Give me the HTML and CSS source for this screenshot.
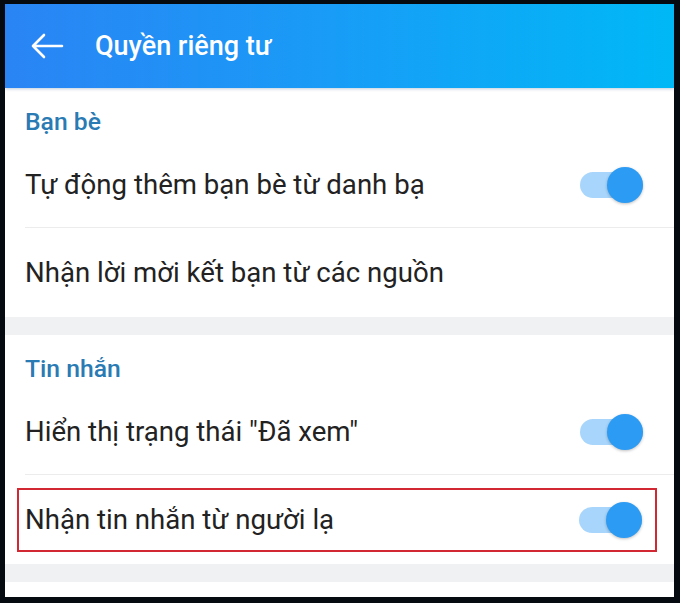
FILE: index.html
```html
<!DOCTYPE html>
<html lang="vi">
<head>
<meta charset="utf-8">
<link rel="stylesheet" href="styles.css">
</head>
<body>
<div class="frame">
  <div class="app">
    <header class="topbar">
      <svg class="back" width="34" height="26" viewBox="0 0 34 26" aria-hidden="true">
        <path d="M32 13H3M14 2L3 13l11 11" fill="none" stroke="#fff" stroke-width="2.6" stroke-linecap="round" stroke-linejoin="round"/>
      </svg>
      <h1 class="title">Quyền riêng tư</h1>
    </header>

    <section class="section">
      <div class="section-title">Bạn bè</div>
      <div class="row row-first">
        <span class="label">Tự động thêm bạn bè từ danh bạ</span>
        <span class="toggle"><span class="knob"></span></span>
      </div>
      <div class="row row-last">
        <span class="label">Nhận lời mời kết bạn từ các nguồn</span>
      </div>
    </section>

    <div class="gap"></div>

    <section class="section">
      <div class="section-title">Tin nhắn</div>
      <div class="row row-first">
        <span class="label">Hiển thị trạng thái "Đã xem"</span>
        <span class="toggle"><span class="knob"></span></span>
      </div>
      <div class="row row-last">
        <div class="highlight">
          <span class="label">Nhận tin nhắn từ người lạ</span>
          <span class="toggle"><span class="knob"></span></span>
        </div>
      </div>
    </section>

    <div class="gap"></div>
  </div>
</div>
</body>
</html>
```

FILE: styles.css
```css
* { box-sizing: border-box; }
html, body { margin: 0; padding: 0; }
body {
  width: 680px;
  height: 603px;
  background: #050a10;
  font-family: Roboto, "Noto Sans", Arial, sans-serif;
  overflow: hidden;
}
.frame {
  width: 680px;
  height: 603px;
  padding: 4px 6px 6px 5px;
}
.app {
  width: 669px;
  height: 593px;
  background: #fff;
  overflow: hidden;
}
.topbar {
  height: 84px;
  display: flex;
  align-items: center;
  padding-left: 25px;
  background: linear-gradient(90deg, #2a84f4 0%, #1a9af7 45%, #00b8f6 100%);
  box-shadow: 0 1px 3px rgba(0, 60, 120, 0.25);
  position: relative;
  z-index: 1;
}
.back { display: block; margin-right: 31px; }
.title {
  margin: 0;
  color: #fff;
  font-size: 27px;
  font-weight: 500;
}
.section { background: #fff; }
.section-title {
  height: 62px;
  padding: 4px 0 0 20px;
  display: flex;
  align-items: center;
  color: #2a7ab3;
  font-size: 24.7px;
  font-weight: 500;
}
.row {
  display: flex;
  align-items: center;
  justify-content: space-between;
  margin-left: 20px;
  padding-right: 31px;
}
.row-first {
  height: 78px;
  border-bottom: 1px solid #ececec;
  padding-bottom: 8px;
}
.row-last { height: 89px; }
.label {
  font-size: 27.6px;
  color: #222;
}
.gap {
  height: 18px;
  background: #f0f1f3;
}
.toggle {
  position: relative;
  width: 63px;
  height: 26px;
  border-radius: 13px;
  background: #a8d5fb;
  flex: none;
}
.knob {
  position: absolute;
  right: 0;
  top: -5px;
  width: 36px;
  height: 36px;
  border-radius: 50%;
  background: #2b9bf4;
  box-shadow: 0 1px 3px rgba(0, 0, 0, 0.25);
}
.highlight {
  width: 640px;
  height: 64px;
  margin-left: -8px;
  margin-right: -16px;
  border: 2.5px solid #d22833;
  display: flex;
  align-items: center;
  justify-content: space-between;
  padding: 0 13px 0 6px;
}
```
